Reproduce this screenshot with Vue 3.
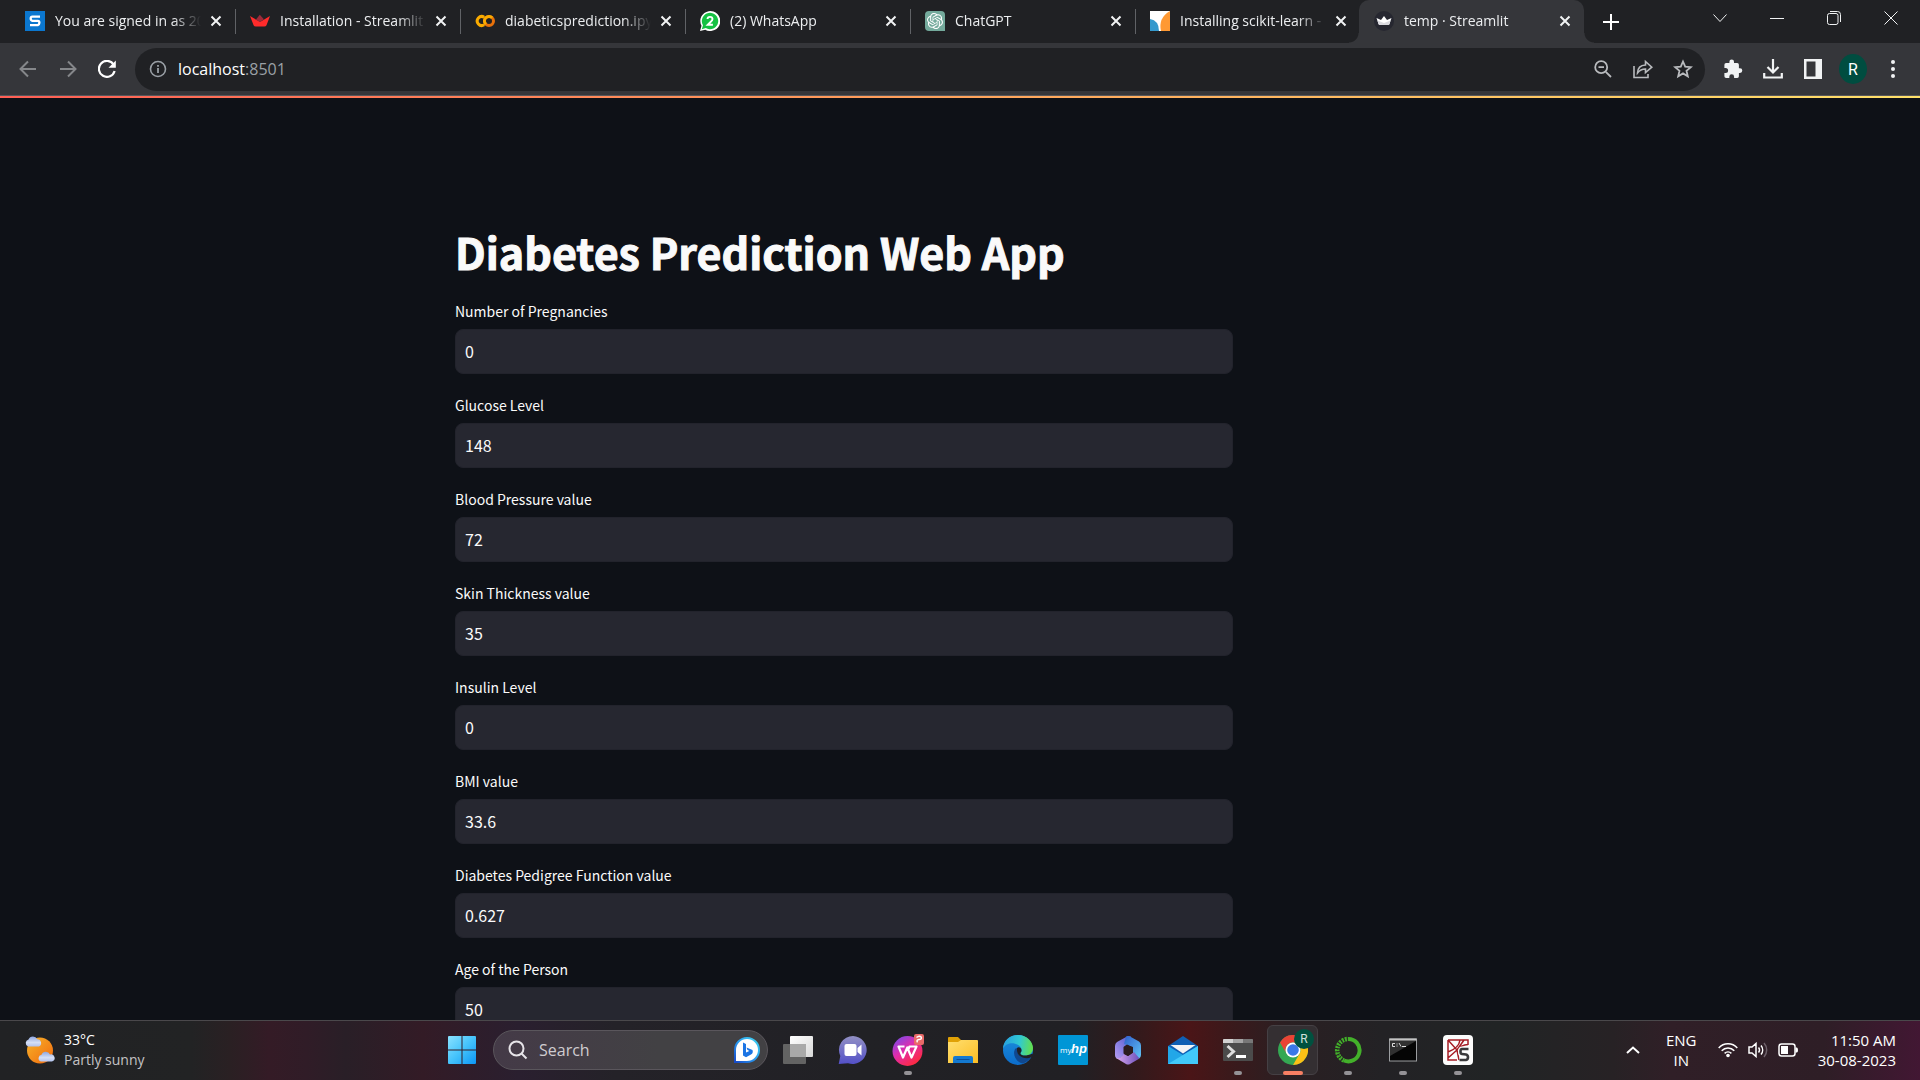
<script setup>
import { ref } from 'vue'

const tabs = ref([
  { id: 'sophos', title: 'You are signed in as 20', active: false },
  { id: 'streamlit', title: 'Installation - Streamlit', active: false },
  { id: 'colab', title: 'diabeticsprediction.ipy', active: false },
  { id: 'whatsapp', title: '(2) WhatsApp', active: false },
  { id: 'chatgpt', title: 'ChatGPT', active: false },
  { id: 'sklearn', title: 'Installing scikit-learn -', active: false },
  { id: 'temp', title: 'temp · Streamlit', active: true },
])

const fields = ref([
  { id: 'pregnancies', label: 'Number of Pregnancies', value: '0' },
  { id: 'glucose', label: 'Glucose Level', value: '148' },
  { id: 'pressure', label: 'Blood Pressure value', value: '72' },
  { id: 'skin', label: 'Skin Thickness value', value: '35' },
  { id: 'insulin', label: 'Insulin Level', value: '0' },
  { id: 'bmi', label: 'BMI value', value: '33.6' },
  { id: 'pedigree', label: 'Diabetes Pedigree Function value', value: '0.627' },
  { id: 'age', label: 'Age of the Person', value: '50' },
])

const apps = [
  { id: 'taskview', name: 'Task view' },
  { id: 'chat', name: 'Chat' },
  { id: 'wps', name: 'WPS Office', open: true },
  { id: 'explorer', name: 'File Explorer' },
  { id: 'edge', name: 'Microsoft Edge' },
  { id: 'myhp', name: 'HP' },
  { id: 'm365', name: 'Microsoft 365' },
  { id: 'mail', name: 'Mail' },
  { id: 'terminal', name: 'Terminal', open: true },
  { id: 'chrome', name: 'Google Chrome', open: true, focused: true },
  { id: 'anaconda', name: 'Anaconda Navigator', open: true },
  { id: 'cmd', name: 'Command Prompt', open: true },
  { id: 'spyder', name: 'Spyder', open: true },
]
</script>

<template>
  <div class="desktop">
    <header class="browser">
      <div class="tabstrip">
        <div v-for="tab in tabs" :key="tab.id" class="tab" :class="{ active: tab.active }">
          <svg v-if="tab.id === 'sophos'" class="favicon" viewBox="0 0 20 20">
            <rect width="20" height="20" fill="#0b77cf" />
            <path d="M15 5.600H7.400Q5.700 5.600 5.700 7.600T7.400 9.800H12.800Q14.400 9.900 14.400 11.800T12.800 14.200H5" fill="none" stroke="#fff" stroke-width="2.300" />
          </svg>
          <svg v-else-if="tab.id === 'streamlit'" class="favicon" viewBox="0 0 20 20">
            <path d="M0 5 6 8.600 9.800 3.700 13.900 8.300 10 11Z" fill="#9c2b3a" />
            <path d="M0 5 10 11 20 5 16.500 14.200Q15.800 15.600 14.300 15.600H5.700Q4.200 15.600 3.600 14.200Z" fill="#ff2b2b" />
          </svg>
          <svg v-else-if="tab.id === 'colab'" class="favicon" viewBox="0 0 20 20" fill="none" stroke-width="3">
            <path d="M9.200 6.200A4.500 4.500 0 1 0 9.200 13.800" stroke="#f9ab00" />
            <circle cx="14" cy="10" r="4.500" stroke="#e8710a" />
            <path d="M10.800 13.200A4.500 4.500 0 0 1 17.200 6.800" stroke="#f9ab00" />
          </svg>
          <svg v-else-if="tab.id === 'whatsapp'" class="favicon" viewBox="0 0 20 20">
            <path d="M0 20 1.500 14.800A10 10 0 1 1 5.300 18.700Z" fill="#fff" />
            <path d="M1.800 18.200 3 14.300A8.200 8.200 0 1 1 5.800 17.100Z" fill="#15c143" />
            <path d="M7.500 8Q7.600 5.900 10 5.900T12.500 8Q12.500 9.300 10.800 10.800L7.800 13.700H12.900" fill="none" stroke="#fff" stroke-width="1.900" />
          </svg>
          <svg v-else-if="tab.id === 'chatgpt'" class="favicon" viewBox="0 0 20 20">
            <path d="M4 0H16Q20 0 20 4V20H4Q0 20 0 16V4Q0 0 4 0Z" fill="#74aa9c" />
            <path transform="translate(2 2) scale(.667)" fill="#fff" d="M22.2819 9.8211a5.9847 5.9847 0 0 0-.5157-4.9108 6.0462 6.0462 0 0 0-6.5098-2.9A6.0651 6.0651 0 0 0 4.9807 4.1818a5.9847 5.9847 0 0 0-3.9977 2.9 6.0462 6.0462 0 0 0 .7427 7.0966 5.98 5.98 0 0 0 .511 4.9107 6.051 6.051 0 0 0 6.5146 2.9001A5.9847 5.9847 0 0 0 13.2599 24a6.0557 6.0557 0 0 0 5.7718-4.2058 5.9894 5.9894 0 0 0 3.9977-2.9001 6.0557 6.0557 0 0 0-.7475-7.0729zm-9.022 12.6081a4.4755 4.4755 0 0 1-2.8764-1.0408l.1419-.0804 4.7783-2.7582a.7948.7948 0 0 0 .3927-.6813v-6.7369l2.02 1.1686a.071.071 0 0 1 .038.052v5.5826a4.504 4.504 0 0 1-4.4945 4.4944zm-9.6607-4.1254a4.4708 4.4708 0 0 1-.5346-3.0137l.142.0852 4.783 2.7582a.7712.7712 0 0 0 .7806 0l5.8428-3.3685v2.3324a.0804.0804 0 0 1-.0332.0615L9.74 19.9502a4.4992 4.4992 0 0 1-6.1408-1.6464zM2.3408 7.8956a4.485 4.485 0 0 1 2.3655-1.9728V11.6a.7664.7664 0 0 0 .3879.6765l5.8144 3.3543-2.0201 1.1685a.0757.0757 0 0 1-.071 0l-4.8303-2.7865A4.504 4.504 0 0 1 2.3408 7.872zm16.5963 3.8558L13.1038 8.364 15.1192 7.2a.0757.0757 0 0 1 .071 0l4.8303 2.7913a4.4944 4.4944 0 0 1-.6765 8.1042v-5.6772a.79.79 0 0 0-.407-.667zm2.0107-3.0231l-.142-.0852-4.7735-2.7818a.7759.7759 0 0 0-.7854 0L9.409 9.2297V6.8974a.0662.0662 0 0 1 .0284-.0615l4.8303-2.7866a4.4992 4.4992 0 0 1 6.6802 4.66zM8.3065 12.863l-2.02-1.1638a.0804.0804 0 0 1-.038-.0567V6.0742a4.4992 4.4992 0 0 1 7.3757-3.4537l-.142.0805L8.704 5.459a.7948.7948 0 0 0-.3927.6813zm1.0976-2.3654l2.602-1.4998 2.6069 1.4998v2.9994l-2.5974 1.4997-2.6067-1.4997Z" />
          </svg>
          <svg v-else-if="tab.id === 'sklearn'" class="favicon" viewBox="0 0 20 20">
            <rect width="20" height="20" fill="#fff" />
            <path d="M0 8Q9 9.500 9 20H0Z" fill="#3499cd" />
            <path d="M20 0V20H11Q8 7 20 0Z" fill="#ff9933" />
          </svg>
          <svg v-else class="favicon" viewBox="0 0 20 20">
            <circle cx="10" cy="10" r="10" fill="#262730" />
            <path d="M2.500 7 7 9 10 5 13 9 17.500 7 15.500 13Q15.200 14 14 14H6Q4.800 14 4.500 13Z" fill="#fff" />
            <path d="M3.500 9.500 10 12 16.500 9.500 15.500 13Q15.200 14 14 14H6Q4.800 14 4.500 13Z" fill="#d9d9de" />
          </svg>
          <span class="tab-title">{{ tab.title }}</span>
          <button class="icon-btn tab-close" aria-label="Close tab">
            <svg width="12" height="12" viewBox="0 0 12 12"><path d="M1.500 1.500 10.500 10.500M10.500 1.500 1.500 10.500" stroke="#f1f3f4" stroke-width="2" /></svg>
          </button>
        </div>
        <button class="icon-btn new-tab" aria-label="New tab">
          <svg width="16" height="16" viewBox="0 0 16 16"><path d="M8 0V16M0 8H16" stroke="#fff" stroke-width="2" /></svg>
        </button>
        <div class="window-controls">
          <button class="icon-btn" aria-label="Search tabs"><svg width="14" height="14" viewBox="0 0 14 14"><path d="M.5 3.500 7 10.500 13.500 3.500" /></svg></button>
          <button class="icon-btn" aria-label="Minimize"><svg width="14" height="14" viewBox="0 0 14 14"><path d="M0 7.500H14" /></svg></button>
          <button class="icon-btn" aria-label="Restore"><svg width="14" height="14" viewBox="0 0 14 14"><rect x=".5" y="2.500" width="10.500" height="11" rx="2" /><path d="M3 .5H10.500Q13.500 .5 13.500 3.500V11" /></svg></button>
          <button class="icon-btn" aria-label="Close"><svg width="14" height="14" viewBox="0 0 14 14"><path d="M.5 .5 13.500 13.500M13.500 .5 .5 13.500" /></svg></button>
        </div>
      </div>

      <div class="toolbar">
        <nav class="nav">
          <button class="icon-btn" aria-label="Back"><svg width="18" height="18" viewBox="0 0 18 18"><path d="M17 9H2M9 1.500 1.500 9 9 16.500" fill="none" stroke="#85878a" stroke-width="2" /></svg></button>
          <button class="icon-btn" aria-label="Forward"><svg width="18" height="18" viewBox="0 0 18 18"><path d="M1 9H16M9 1.500 16.500 9 9 16.500" fill="none" stroke="#85878a" stroke-width="2" /></svg></button>
          <button class="icon-btn" aria-label="Reload"><svg width="18" height="18" viewBox="0 0 18 18"><path d="M15.600 4.500A8 8 0 1 0 16.600 11" fill="none" stroke="#fff" stroke-width="2.200" /><path d="M17.800 .5V7.800H10.500Z" fill="#fff" /></svg></button>
        </nav>
        <div class="omnibox">
          <svg width="18" height="18" viewBox="0 0 18 18"><circle cx="9" cy="9" r="7.500" fill="none" stroke="#9aa0a6" stroke-width="1.600" /><path d="M9 8V13M9 5V6.800" stroke="#9aa0a6" stroke-width="1.800" /></svg>
          <span class="url">localhost<span class="port">:8501</span></span>
          <button class="icon-btn" aria-label="Zoom"><svg width="18" height="18" viewBox="0 0 18 18" fill="none" stroke="#b9bbbe" stroke-width="1.800"><circle cx="7.200" cy="7.200" r="6" /><path d="M11.800 11.800 17 17M4.500 7.200H10" /></svg></button>
          <button class="icon-btn" aria-label="Share"><svg width="20" height="20" viewBox="0 0 20 20" fill="none" stroke="#b9bbbe" stroke-width="1.600"><path d="M1 7V18.500H15V15" /><path d="M4.500 14Q4.800 6.200 12.500 6V2.500L18.800 8.200 12.500 13.600V10Q7.500 10 4.500 14Z" /></svg></button>
          <button class="icon-btn" aria-label="Bookmark"><svg width="20" height="20" viewBox="0 0 20 20"><path d="M10 2.500 12.200 7.600 17.800 8.100 13.500 11.800 14.800 17.300 10 14.400 5.200 17.300 6.500 11.800 2.200 8.100 7.800 7.600Z" fill="none" stroke="#b9bbbe" stroke-width="1.800" /></svg></button>
        </div>
        <div class="actions">
          <button class="icon-btn" aria-label="Extensions"><svg width="20" height="20" viewBox="0 0 20 20"><path d="M17 9.300H15.900V5.700Q15.900 4 14.200 4H11V2.800A2.300 2.300 0 0 0 6.400 2.800V4H3.100Q1.400 4 1.400 5.700V8.900H2.600A2.500 2.500 0 0 1 2.600 13.900H1.400V17.200Q1.400 19 3.100 19H6.300V17.700A2.400 2.400 0 0 1 11.100 17.700V19H14.200Q15.900 19 15.900 17.200V13.900H17A2.300 2.300 0 0 0 17 9.300Z" fill="#f1f3f4" /></svg></button>
          <button class="icon-btn" aria-label="Downloads"><svg width="20" height="20" viewBox="0 0 20 20"><path d="M10 0V13M4.500 8 10 13.500 15.500 8M1.200 14V18.500H18.800V14" fill="none" stroke="#f1f3f4" stroke-width="2.200" /></svg></button>
          <button class="icon-btn" aria-label="Side panel"><svg width="18" height="20" viewBox="0 0 18 20"><path d="M0 0H18V20H0ZM2.500 2.500V17.500H11.500V2.500Z" fill="#f1f3f4" fill-rule="evenodd" /></svg></button>
          <button class="icon-btn avatar" aria-label="Profile">R</button>
          <button class="icon-btn" aria-label="Menu"><svg width="4" height="18" viewBox="0 0 4 18" fill="#f1f3f4"><circle cx="2" cy="2" r="2" /><circle cx="2" cy="9" r="2" /><circle cx="2" cy="16" r="2" /></svg></button>
        </div>
      </div>
    </header>

    <main class="page">
      <form class="form" @submit.prevent>
        <h1>Diabetes Prediction Web App</h1>
        <div v-for="field in fields" :key="field.id" class="field">
          <label :for="field.id">{{ field.label }}</label>
          <input :id="field.id" v-model="field.value" type="text" />
        </div>
      </form>
    </main>

    <footer class="taskbar">
      <button class="icon-btn weather">
        <svg width="32" height="30" viewBox="0 0 32 30">
          <defs>
            <linearGradient id="sun" x1="0" y1="0" x2="1" y2="1"><stop offset="0" stop-color="#f6b42a" /><stop offset="1" stop-color="#f2690d" /></linearGradient>
            <linearGradient id="cloud" x1="0" y1="0" x2="0" y2="1"><stop offset="0" stop-color="#8ea6e0" /><stop offset=".6" stop-color="#d5dff6" /><stop offset="1" stop-color="#b3c3ee" /></linearGradient>
          </defs>
          <circle cx="16" cy="15.500" r="13" fill="url(#sun)" />
          <path d="M4 11.500A3.700 3.700 0 0 1 4.500 4.500 4.800 4.800 0 0 1 13.300 4.300 3.800 3.800 0 0 1 15 11.500Z" fill="url(#cloud)" />
          <path d="M17 26.500A3.500 3.500 0 0 1 17.500 19.700 4.600 4.600 0 0 1 26 19.500 3.600 3.600 0 0 1 28 26.500Z" fill="url(#cloud)" />
        </svg>
        <span class="weather-text"><span>33°C</span><span class="muted">Partly sunny</span></span>
      </button>

      <div class="dock">
        <button class="icon-btn app" aria-label="Start">
          <svg width="30" height="30" viewBox="0 0 30 30">
            <defs><linearGradient id="win" x1="0" y1="0" x2="1" y2="1"><stop offset="0" stop-color="#8be2ff" /><stop offset=".5" stop-color="#45c3fb" /><stop offset="1" stop-color="#0c96f5" /></linearGradient></defs>
            <path d="M1 2Q1 1 2 1H14.500V14.500H1ZM15.500 1H28Q29 1 29 2V14.500H15.500ZM1 15.500H14.500V29H2Q1 29 1 28ZM15.500 15.500H29V28Q29 29 28 29H15.500Z" fill="url(#win)" />
          </svg>
        </button>
        <label class="search">
          <svg width="20" height="20" viewBox="0 0 20 20" fill="none" stroke="#e6e4e8" stroke-width="2"><circle cx="8.500" cy="8.500" r="7" /><path d="M13.500 13.500 18.500 18.500" /></svg>
          <input type="text" placeholder="Search" aria-label="Search" />
          <svg width="26" height="26" viewBox="0 0 26 26">
            <defs><linearGradient id="bing" x1="0" y1="1" x2="1" y2="0"><stop offset="0" stop-color="#174ac8" /><stop offset=".5" stop-color="#2a9df0" /><stop offset="1" stop-color="#3fd3ee" /></linearGradient></defs>
            <path d="M1 25V13A12 12 0 1 1 13 25Z" fill="#fff" stroke="url(#bing)" stroke-width="2" />
            <path d="M9 5.500 12 7V15.500L15.300 14 13.300 12.800 12.500 10.500 18.500 13Q19.500 16 17 17.500L12 20.300 9 18.500Z" fill="#1b74e4" />
          </svg>
        </label>

        <button v-for="app in apps" :key="app.id" class="icon-btn app" :class="{ focused: app.focused, open: app.open }" :aria-label="app.name">
          <svg v-if="app.id === 'taskview'" width="30" height="30" viewBox="0 0 30 30">
            <defs><linearGradient id="tv" x1="0" y1="0" x2="1" y2="1"><stop offset="0" stop-color="#fff" /><stop offset="1" stop-color="#d8d8d8" /></linearGradient></defs>
            <rect x="7" y="1" width="23" height="21" rx="1" fill="url(#tv)" />
            <rect x="0" y="9" width="23" height="20" rx="1" fill="#6e6e6e" fill-opacity=".85" />
            <rect x="7" y="9" width="16" height="13" fill="#a9a9a9" />
          </svg>
          <svg v-else-if="app.id === 'chat'" width="30" height="30" viewBox="0 0 30 30">
            <defs><linearGradient id="ct" x1="0" y1="0" x2="0" y2="1"><stop offset="0" stop-color="#9290c4" /><stop offset="1" stop-color="#5350c8" /></linearGradient></defs>
            <path d="M15 1A14 14 0 1 1 10 28.200L.7 29 2.300 21A14 14 0 0 1 15 1Z" fill="url(#ct)" />
            <rect x="6.500" y="9" width="12" height="12" rx="2" fill="#fff" /><path d="M19.500 13 23.500 9.500V20.500L19.500 17Z" fill="#fff" />
          </svg>
          <svg v-else-if="app.id === 'wps'" width="32" height="32" viewBox="0 0 32 32">
            <defs><linearGradient id="wp" x1="0" y1="0" x2=".7" y2="1"><stop offset="0" stop-color="#6a50f4" /><stop offset=".5" stop-color="#e12cab" /><stop offset="1" stop-color="#ff2a3b" /></linearGradient></defs>
            <circle cx="15.500" cy="17" r="15" fill="url(#wp)" />
            <path d="M12.500 12.500H6.500L11 23.500 15.300 13.500 19.500 23.500 24.500 12.500H17.500L16.500 15" fill="none" stroke="#fff" stroke-width="2.200" stroke-linejoin="round" />
            <rect x="22" y="0" width="10" height="11" rx="2" fill="#e96a68" />
            <path d="M24.500 3.500Q27.500 1 29.300 3.200 29.800 5.500 27 5.500 24 6 25.500 8.300" fill="none" stroke="#fff" stroke-width="1.500" />
          </svg>
          <svg v-else-if="app.id === 'explorer'" width="30" height="30" viewBox="0 0 30 30">
            <defs><linearGradient id="fe" x1="0" y1="0" x2="1" y2="1"><stop offset="0" stop-color="#ffdf70" /><stop offset="1" stop-color="#fbbd24" /></linearGradient></defs>
            <path d="M0 3Q0 2 1 2H10L13 5H28V10H0Z" fill="#e0a106" />
            <path d="M0 7H10L13 5H29Q30 5 30 6V28H0Z" fill="url(#fe)" />
            <path d="M5 28V23Q5 21 7 21H23Q25 21 25 23V28Z" fill="#1479d0" /><path d="M8.500 24.500H21.500" stroke="#0c4e98" />
          </svg>
          <svg v-else-if="app.id === 'edge'" width="30" height="30" viewBox="0 0 30 30">
            <defs>
              <linearGradient id="eg" x1="0" y1=".3" x2="1" y2=".4"><stop offset="0" stop-color="#279fe0" /><stop offset=".55" stop-color="#31c9d2" /><stop offset="1" stop-color="#63e04c" /></linearGradient>
              <linearGradient id="eb" x1="0" y1="0" x2="0" y2="1"><stop offset="0" stop-color="#1c8fdc" /><stop offset="1" stop-color="#0c6ccb" /></linearGradient>
            </defs>
            <circle cx="15" cy="15" r="15" fill="url(#eb)" />
            <path d="M0 14C0 6 6.500 0 15 0 24 0 30 7 30 13 30 18 26.500 20.500 22.500 20.500 19 20.500 17 19.500 17.500 18 18.700 16.600 19 15 18.300 13.500 16.500 8 4 5 0 14Z" fill="url(#eg)" />
            <path d="M12.500 13.500C8.500 19 13.500 28 20 28.500 23.500 27 27 24.500 28.500 21.500 23.500 24 15.500 22.500 14.500 17 14 14.500 15.500 12.500 12.500 13.500Z" fill="#10488f" />
            <path d="M14 13C15.500 11.500 18.500 12.500 18.500 15.500 18.500 17.200 17.200 17.400 17.500 18.700 18 20.500 22 21 25 20 29 19.500 30 17 30 21L28.500 22C23 25 14.500 22 14 16Z" fill="#202125" />
          </svg>
          <svg v-else-if="app.id === 'myhp'" width="30" height="30" viewBox="0 0 30 30">
            <rect width="30" height="30" rx="1" fill="#0096d6" />
            <text x="2" y="18" class="hp-my">my</text><text x="13" y="18" class="hp-hp">hp</text>
          </svg>
          <svg v-else-if="app.id === 'm365'" width="28" height="30" viewBox="0 0 28 30">
            <defs>
              <linearGradient id="m1" x1="1" y1="0" x2="0" y2="1"><stop offset="0" stop-color="#4b58ce" /><stop offset="1" stop-color="#b89df3" /></linearGradient>
              <linearGradient id="m2" x1="0" y1="0" x2="1" y2="1"><stop offset="0" stop-color="#2e60cc" /><stop offset="1" stop-color="#62c4f5" /></linearGradient>
              <linearGradient id="m3" x1="0" y1="0" x2="1" y2="0"><stop offset="0" stop-color="#ddaaf0" /><stop offset="1" stop-color="#6b50bb" /></linearGradient>
            </defs>
            <path d="M14 1 3 7Q1 8.500 1 11V20Q1 23 4 24L10 21V12L17 7V1.500Z" fill="url(#m1)" />
            <path d="M12 1.500Q14 .5 16 1.500L25 6.500Q27 8 27 10.500V20Q27 22 25 23.500L19 19V12L10 9Z" fill="url(#m2)" />
            <path d="M2 23Q7 24 10 19L14 21 20 17 25.500 23.500 16 29Q14 30 12 29Z" fill="url(#m3)" />
            <path d="M13 9.500 19 12.500V17.500L14 21 9.500 18.500V12Z" fill="#2c1c1f" />
          </svg>
          <svg v-else-if="app.id === 'mail'" width="30" height="30" viewBox="0 0 30 30">
            <path d="M0 11 15 1 30 11V20H0Z" fill="#0f5fb4" />
            <path d="M0 11 15 20 30 11V29H0Z" fill="#22a7e8" /><path d="M0 29 30 11V29Z" fill="#42c9fa" /><path d="M2.500 10H27.500L15 18.500Z" fill="#f3f3f5" />
          </svg>
          <svg v-else-if="app.id === 'terminal'" width="30" height="30" viewBox="0 0 30 30">
            <rect y="4" width="30" height="22" rx="1" fill="#4b4b4b" /><path d="M0 8V5Q0 4 1 4H10V8Z" fill="#d2d2d2" /><path d="M10 4H20V8H10Z" fill="#a5a5a5" /><path d="M20 4H29Q30 4 30 5V8H20Z" fill="#777" />
            <path d="M4.500 11 10.500 16.500 4.500 22" fill="none" stroke="#ddd" stroke-width="3" /><path d="M13 21.500H23" stroke="#fff" stroke-width="3" />
          </svg>
          <svg v-else-if="app.id === 'chrome'" width="30" height="30" viewBox="0 0 30 30">
            <circle cx="15" cy="15" r="15" fill="#34a853" />
            <path d="M2 7.500A15 15 0 0 1 28 7.500H15A7.500 7.500 0 0 0 8.500 18.800Z" fill="#ea4335" />
            <path d="M28 7.500A15 15 0 0 1 15 30L21.500 18.800A7.500 7.500 0 0 0 15 7.500Z" fill="#fbc116" />
            <circle cx="15" cy="15" r="7.500" fill="#fff" /><circle cx="15" cy="15" r="5.800" fill="#3b78e7" />
          </svg>
          <svg v-else-if="app.id === 'anaconda'" width="28" height="28" viewBox="0 0 28 28" fill="none" stroke="#43b02a">
            <path d="M14 3A11.200 11.200 0 1 1 10 24.500" stroke-width="4" />
            <path d="M10 24.500A11.200 11.200 0 0 1 14 3" stroke-width="4.500" stroke-dasharray="2 1" />
            <path d="M9 24A11.500 11.500 0 0 1 13 3" stroke="#222326" stroke-width="1" stroke-dasharray="1 2" />
          </svg>
          <svg v-else-if="app.id === 'cmd'" width="28" height="24" viewBox="0 0 28 24">
            <rect x=".5" y="1" width="27" height="22" fill="#050505" stroke="#9b9da0" /><path d="M1 1.500H27V3L1 18Z" fill="#555" fill-opacity=".55" /><path d="M.5 1.500H27.500" stroke="#c4c4c4" stroke-width="2" />
            <path d="M6 5.500H3.500V8.500H6M8 5.500V6.500M8 7.500V8.500M10 5 12 8.500M13 8.500H17" fill="none" stroke="#ddd" />
          </svg>
          <svg v-else width="30" height="30" viewBox="0 0 30 30">
            <rect width="30" height="30" rx="4" fill="#fcfcfc" />
            <path d="M5 5H25V10M5 5V25H14M5 5 14 15 16 25M14 15Q18 10 25 9.500M17 5Q16 13 5 17M14 15 5 23M14 15 21 5" fill="none" stroke="#a51c24" stroke-width="1.500" />
            <path d="M25.500 14H19Q17.500 14 17.500 16.500T19 19L23 19.500Q25 20 25 22.300T23 25H16.500" fill="none" stroke="#fcfcfc" stroke-width="5" />
            <path d="M25.500 14H19Q17.500 14 17.500 16.500T19 19L23 19.500Q25 20 25 22.300T23 25H16.500" fill="none" stroke="#39393b" stroke-width="2.600" />
          </svg>
          <span v-if="app.focused" class="badge">R</span>
        </button>
      </div>

      <div class="tray">
        <button class="icon-btn chevron" aria-label="Hidden icons"><svg width="14" height="8" viewBox="0 0 14 8"><path d="M1 7 7 1.500 13 7" fill="none" stroke="#fff" stroke-width="2" /></svg></button>
        <button class="icon-btn lang"><span>ENG</span><span>IN</span></button>
        <button class="icon-btn status" aria-label="Network, volume, battery">
          <svg width="20" height="16" viewBox="0 0 20 16" fill="none" stroke="#fff" stroke-width="1.500"><path d="M.7 6A12.500 12.500 0 0 1 19.300 6M3.700 8.800A8.500 8.500 0 0 1 16.300 8.800M6.600 11.400A5 5 0 0 1 13.400 11.400" /><circle cx="10" cy="13.500" r="1.800" fill="#fff" stroke="none" /></svg>
          <svg width="20" height="16" viewBox="0 0 20 16" fill="none" stroke="#fff" stroke-width="1.500"><path d="M1 5H4L8 1.500V14.500L4 11H1ZM10.500 5.500A4 4 0 0 1 10.500 10.500M13 3.500A7 7 0 0 1 13 12.500" /><path d="M16 1A10.500 10.500 0 0 1 16 15" stroke="#6d6069" /></svg>
          <svg width="20" height="16" viewBox="0 0 20 16"><rect x="1" y="2" width="16" height="12" rx="2.500" fill="none" stroke="#fff" stroke-width="1.500" /><rect x="3" y="4" width="7" height="8" fill="#fff" /><path d="M17.500 5.500H19Q20 6 20 8T19 10.500H17.500Z" fill="#fff" /></svg>
        </button>
        <button class="icon-btn clock"><span>11:50 AM</span><span>30-08-2023</span></button>
      </div>
    </footer>
  </div>
</template>

<style>
body {
  background: #0e1117;
}
</style>

<style scoped>
.desktop {
  display: flex;
  flex-direction: column;
  height: 100vh;
  overflow: hidden;
  color: #fff;
  font-family: "Open Sans", "Noto Sans", sans-serif;
  font-size: 14px;
}
.desktop *,
.desktop *::before,
.desktop *::after {
  box-sizing: border-box;
}
.icon-btn {
  display: flex;
  align-items: center;
  justify-content: center;
  padding: 0;
  border: 0;
  background: none;
  color: inherit;
  font: inherit;
}
svg {
  flex: none;
  display: block;
}

/* Tab strip */
.browser {
  flex: none;
}
.tabstrip {
  display: flex;
  height: 43px;
  padding-left: 10px;
  background: #202124;
}
.tab {
  position: relative;
  display: flex;
  align-items: center;
  flex: 0 1 225px;
  min-width: 0;
  padding: 0 12px 2px 15px;
}
.tab:not(.active)::after {
  content: "";
  position: absolute;
  right: -1px;
  top: 9px;
  width: 1px;
  height: 25px;
  background: #606266;
}
.tab:nth-last-of-type(3)::after {
  display: none;
}
.tab.active {
  margin-left: -1px;
  border-radius: 10px 10px 0 0;
  background: #35363a;
}
.tab.active::before,
.tab.active::after {
  content: "";
  position: absolute;
  bottom: 0;
  width: 10px;
  height: 10px;
}
.tab.active::before {
  left: -10px;
  background: radial-gradient(circle at 0 0, transparent 9px, #35363a 10px);
}
.tab.active::after {
  right: -10px;
  background: radial-gradient(circle at 100% 0, transparent 9px, #35363a 10px);
}
.favicon {
  width: 20px;
  height: 20px;
}
.tab-title {
  flex: 1;
  min-width: 0;
  margin-left: 10px;
  overflow: hidden;
  white-space: nowrap;
  color: #eceef0;
  mask-image: linear-gradient(90deg, #000 calc(100% - 28px), transparent);
}
.tab-close {
  width: 14px;
  height: 14px;
  margin-left: 8px;
}
.new-tab {
  width: 34px;
  margin-left: 10px;
}
.window-controls {
  display: flex;
  margin-left: auto;
  height: 36px;
  padding-right: 1px;
}
.window-controls .icon-btn {
  width: 57px;
}
.window-controls svg {
  fill: none;
  stroke: #f1f3f4;
}

/* Address bar */
.toolbar {
  display: flex;
  align-items: center;
  height: 53px;
  border-bottom: 1px solid #55565a;
  background: #35363a;
}
.nav {
  display: flex;
  width: 135px;
  padding: 0 8px;
}
.nav .icon-btn {
  width: 40px;
}
.omnibox {
  display: flex;
  align-items: center;
  flex: 1;
  height: 43px;
  padding: 0 2px 0 14px;
  border-radius: 22px;
  background: #202124;
}
.omnibox .icon-btn {
  width: 40px;
}
.url {
  flex: 1;
  margin-left: 11px;
  font-size: 16px;
}
.port {
  color: #9aa0a6;
}
.actions {
  display: flex;
  align-items: center;
  padding: 0 7px 0 8px;
}
.actions .icon-btn {
  width: 40px;
}
.actions .avatar {
  width: 28px;
  height: 30px;
  margin: 0 6px;
  border-radius: 50%;
  background: #004d40;
  font-family: Roboto, sans-serif;
  font-size: 16px;
}

/* Streamlit page */
.page {
  flex: 1;
  min-height: 0;
  display: grid;
  grid-template-columns: 455fr minmax(0, 778px) 687fr;
  align-items: start;
  overflow: hidden;
  border-top: 2px solid;
  border-image: linear-gradient(90deg, #ff5f55, #ffa35c 50%, #ffe16a) 1;
  background: #0e1117;
  color: #fafafa;
  font-family: "Noto Sans CJK SC", sans-serif;
}
.form {
  grid-column: 2;
  padding-top: 120px;
}
h1 {
  margin: 0 0 17px;
  font-size: 43px;
  font-weight: 700;
  line-height: 66px;
  -webkit-text-stroke: 1px #fafafa;
}
.field {
  display: flex;
  flex-direction: column;
  height: 94px;
}
.field label {
  height: 28px;
  font-size: 14px;
  line-height: 20px;
}
.field input {
  height: 45px;
  padding: 0 9px 2px;
  border: 1px solid #22232c;
  border-radius: 8px;
  background: #262730;
  color: #fafafa;
  font-family: inherit;
  font-size: 16px;
}

/* Taskbar */
.taskbar {
  flex: none;
  display: grid;
  grid-template-columns: 1fr auto 1fr;
  height: 60px;
  border-top: 1px solid #4a484b;
  background: linear-gradient(90deg, #212224 0, #222324 10%, #2a2023 12%, #341b26 14%, #301c27 16%, #291f27 18%, #331b26 22%, #2a1f2f 27%, #242228 32%, #212125 45%, #212024 56%, #311a1c 59%, #4a1517 62%, #3b191b 64%, #2a1f22 67%, #232225 72%, #212425 78%, #272225 84%, #301f27 87%, #2e1e26 95%, #421733 100%);
}
.weather {
  justify-self: start;
  gap: 8px;
  padding: 0 0 2px 24px;
}
.weather-text,
.lang,
.clock {
  display: flex;
  flex-direction: column;
  line-height: 20px;
  text-align: left;
}
.muted {
  color: #c4c2c4;
}
.dock {
  display: flex;
  align-items: center;
  padding: 0 1px 1px 0;
}
.app {
  position: relative;
  width: 55px;
  height: 58px;
}
.app.open::after {
  content: "";
  position: absolute;
  bottom: 4px;
  width: 8px;
  height: 4px;
  border-radius: 2px;
  background: #949296;
}
.app.focused::before {
  content: "";
  position: absolute;
  inset: 4px 2px;
  border: 1px solid #454044;
  border-radius: 6px;
  background: #342f32;
}
.app.focused svg {
  position: relative;
}
.app.focused::after {
  width: 20px;
  background: #f77f63;
}
.badge {
  position: absolute;
  top: 8px;
  right: 6px;
  width: 20px;
  height: 20px;
  border-radius: 50%;
  background: #00513f;
  color: #cfe0dc;
  font-family: Roboto, sans-serif;
  font-size: 12px;
  line-height: 20px;
}
.search {
  display: flex;
  align-items: center;
  width: 275px;
  height: 40px;
  margin: 0 2px 0 4px;
  padding: 0 7px 0 14px;
  border: 1px solid #5a565c;
  border-radius: 20px;
  background: linear-gradient(90deg, #443a47, #424144 60%);
}
.search input {
  flex: 1;
  min-width: 0;
  padding: 0 11px;
  border: 0;
  background: none;
  color: #fff;
  font: inherit;
  font-size: 16px;
}
.search input::placeholder {
  color: #cfccd0;
  opacity: 1;
}
.tray {
  display: flex;
  align-items: center;
  justify-content: flex-end;
  padding: 0 24px 2px 0;
  font-size: 15px;
}
.chevron {
  width: 40px;
}
.lang {
  width: 57px;
}
.status {
  gap: 10px;
  margin: 0 20px 0 8px;
}
.clock {
  align-items: flex-end;
}
.hp-my {
  fill: #fff;
  font: 8px "Open Sans", sans-serif;
}
.hp-hp {
  fill: #fff;
  font: italic 700 13px "Liberation Sans", sans-serif;
}
</style>
